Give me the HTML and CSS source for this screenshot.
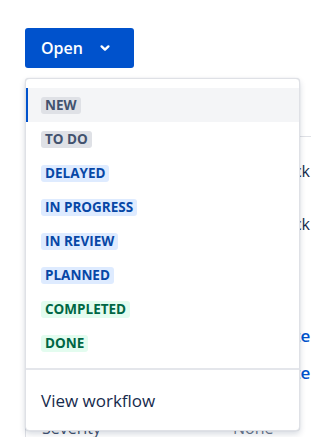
FILE: index.html
```html
<!DOCTYPE html>
<html lang="en">
<head>
<meta charset="utf-8">
<title>Status</title>
<link rel="stylesheet" href="styles.css">
</head>
<body>
<div class="page">
  <div class="toolbar">
    <button class="status-btn" type="button">
      <span class="btn-label">Open</span>
      <span class="btn-icon">
        <svg width="24" height="24" viewBox="0 0 24 24" aria-hidden="true"><path d="M8.6 10.4 12 13.6l3.4-3.2" fill="none" stroke="#fff" stroke-width="2.4" stroke-linecap="round" stroke-linejoin="round"/></svg>
      </span>
    </button>
  </div>

  <div class="details">
    <div class="rule"></div>
    <div class="side-row first">Give feedback</div>
    <div class="side-row second">Give feedback</div>
    <div class="side-link first">Create Issue</div>
    <div class="side-link second">Create Child</div>
    <div class="field">
      <span class="field-label">Severity</span>
      <span class="field-value">None</span>
    </div>
  </div>

  <div class="menu">
    <div class="menu-group">
      <div class="menu-item selected"><span class="lozenge grey">New</span></div>
      <div class="menu-item"><span class="lozenge grey">To Do</span></div>
      <div class="menu-item"><span class="lozenge blue">Delayed</span></div>
      <div class="menu-item"><span class="lozenge blue">In Progress</span></div>
      <div class="menu-item"><span class="lozenge blue">In Review</span></div>
      <div class="menu-item"><span class="lozenge blue">Planned</span></div>
      <div class="menu-item"><span class="lozenge green">Completed</span></div>
      <div class="menu-item"><span class="lozenge green">Done</span></div>
    </div>
    <div class="menu-group footer">
      <div class="menu-item text-item">View workflow</div>
    </div>
  </div>
</div>
</body>
</html>
```

FILE: styles.css
```css
* { box-sizing: border-box; }

html, body {
  margin: 0;
  padding: 0;
  background: #ffffff;
  overflow: hidden;
}

body {
  font-family: "Open Sans", "Noto Sans", "Liberation Sans", sans-serif;
  color: #172B4D;
}

.page {
  position: relative;
  width: 311px;
  height: 437px;
  overflow: hidden;
}

.toolbar {
  padding: 28px 0 0 25px;
  display: flex;
}

.status-btn {
  display: flex;
  align-items: center;
  height: 40px;
  width: 109px;
  padding: 0 0 0 16px;
  border: 0;
  border-radius: 3px;
  background: #0052CC;
  color: #ffffff;
  font-family: inherit;
  font-size: 16px;
  font-weight: 600;
  cursor: pointer;
}

.btn-label { line-height: 20px; }

.btn-icon {
  display: flex;
  width: 24px;
  height: 24px;
  margin-left: 10px;
}

.details {
  position: relative;
}

.rule {
  margin-top: 68px;
  margin-left: 200px;
  height: 1px;
  background: #DFE1E6;
}

.side-row {
  white-space: nowrap;
  font-size: 16px;
  line-height: 20px;
  color: #172B4D;
  text-align: right;
  padding-right: 1px;
}
.side-row.first { margin-top: 24px; }
.side-row.second { margin-top: 33px; }

.side-link {
  white-space: nowrap;
  font-size: 17px;
  font-weight: 600;
  line-height: 20px;
  color: #0052CC;
  padding-left: 256px;
}
.side-link.first { margin-top: 92px; }
.side-link.second { margin-top: 17px; }

.field {
  display: flex;
  margin-top: 35px;
  margin-left: 25px;
  border-left: 1px solid #DFE1E6;
  padding-left: 16px;
  font-size: 16px;
  line-height: 20px;
  color: #42526E;
}
.field-label { width: 191px; }
.field-value { color: #6B778C; }

.menu {
  position: absolute;
  left: 25px;
  top: 78px;
  width: 275px;
  height: 353px;
  background: #ffffff;
  border: 1px solid #DFE1E6;
  border-radius: 4px;
  box-shadow: 0 3px 6px rgba(9, 30, 66, 0.16), 0 0 1px rgba(9, 30, 66, 0.2);
  overflow: hidden;
}

.menu-group {
  padding: 9px 0 8px;
}

.menu-group.footer {
  border-top: 2px solid #E4E6EB;
  padding: 8px 0;
}

.menu-item {
  display: flex;
  align-items: center;
  height: 34px;
  padding-left: 13px;
  border-left: 2px solid transparent;
}

.menu-item.selected {
  background: #F4F5F7;
  border-left-color: #0052CC;
}

.text-item {
  height: 44px;
  font-size: 17px;
  color: #172B4D;
}

.lozenge {
  display: inline-block;
  padding: 0 4px;
  border-radius: 3px;
  font-size: 13.5px;
  font-weight: 700;
  line-height: 17px;
  text-transform: uppercase;
  white-space: nowrap;
}

.lozenge.grey { background: #DFE1E6; color: #42526E; }
.lozenge.blue { background: #DEEBFF; color: #0747A6; }
.lozenge.green { background: #E3FCEF; color: #006644; }
```
